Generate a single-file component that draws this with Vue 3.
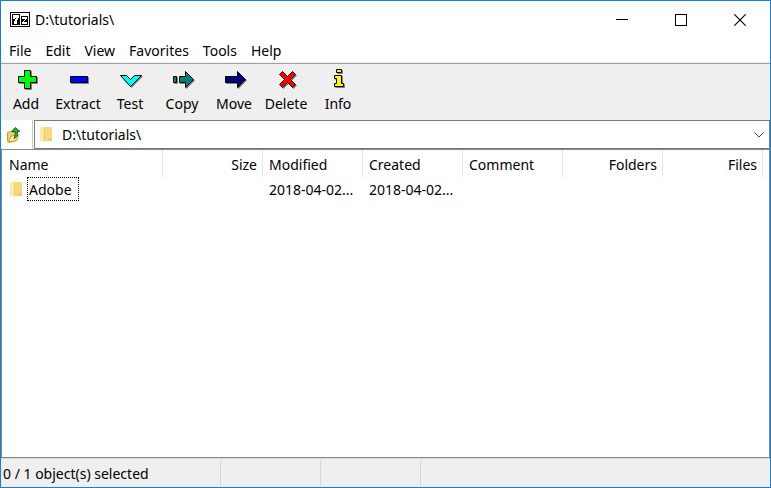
<template>
  <div class="window">
    <header class="titlebar">
      <svg class="logo" width="20" height="16" viewBox="0 0 20 16" shape-rendering="crispEdges">
        <rect width="20" height="15" fill="#000" />
        <rect x="1" y="1" width="18" height="13" fill="#fff" />
        <path d="M2 2h8v11h-8zM11 4h7v9h-7z" fill="#000" />
        <path d="M3 3h6v3h-1v2h-1v4h-3v-3h1v-2h1v-1h-1v1h-2z" fill="#fff" />
        <path d="M12 5h5v2h-1v1h-1v1h-1v1h3v2h-5v-2h1v-1h1v-1h1v-1h-3z" fill="#fff" />
      </svg>
      <h1 class="title">{{ path }}</h1>
      <div class="window-buttons">
        <button type="button" aria-label="Minimize">
          <svg width="12" height="12" viewBox="0 0 12 12" shape-rendering="crispEdges">
            <path d="M0 5.5h12" stroke="#000" />
          </svg>
        </button>
        <button type="button" aria-label="Maximize">
          <svg width="12" height="12" viewBox="0 0 12 12" shape-rendering="crispEdges">
            <rect x="0.5" y="0.5" width="11" height="11" fill="none" stroke="#000" />
          </svg>
        </button>
        <button type="button" aria-label="Close">
          <svg width="12" height="12" viewBox="0 0 12 12">
            <path d="M0.3 0.3l11.4 11.4M11.7 0.3l-11.4 11.4" stroke="#000" stroke-width="1.1" />
          </svg>
        </button>
      </div>
    </header>

    <nav class="menu">
      <button v-for="item in menu" :key="item" type="button">{{ item }}</button>
    </nav>

    <div class="toolbar" role="toolbar">
      <button v-for="tool in tools" :key="tool.label" type="button">
        <svg width="25" height="24" viewBox="0 0 25 24">
          <path
            v-for="(d, i) in tool.shapes"
            :key="'s' + i"
            :d="d"
            fill="#808080"
            stroke="#808080"
            transform="translate(1 1)"
          />
          <path
            v-for="(d, i) in tool.shapes"
            :key="i"
            :d="d"
            :fill="tool.color"
            stroke="#000"
          />
        </svg>
        <span>{{ tool.label }}</span>
      </button>
    </div>

    <div class="address">
      <button class="up" type="button" aria-label="Up one level">
        <svg width="16" height="18" viewBox="0 0 16 18">
          <path d="M1.5 6.5l3.5-1 1.500 1h4v8l-7 2-2-1z" fill="#f0d070" stroke="#c9a02c" />
          <path d="M2.5 16l2.5-6 7.5-1-2 5.5z" fill="#fff3b0" stroke="#c59a2c" />
          <path
            d="M9.5 1.5l4.500 4h-2.500c.5 4-.5 6-3.500 7 1-2 1.300-4 1.200-7H5.500z"
            fill="#32a532"
            stroke="#13701a"
          />
        </svg>
      </button>
      <div class="combo">
        <svg class="folder" width="13" height="17" viewBox="0 0 13 17">
          <path d="M3 1h9v14H3z" fill="#f8d982" />
          <path d="M8 12h4v3H8z" fill="#f0ca66" />
          <path d="M0 1l4 1v14l-4-1z" fill="#ffe9a9" />
          <path d="M4 2h1v13H4z" fill="#efc96c" />
        </svg>
        <input v-model="path" type="text" aria-label="Path" />
        <button type="button" aria-label="Show folders">
          <svg width="10" height="6" viewBox="0 0 10 6">
            <path d="M0.5 0.5l4.5 4.5 4.5-4.5" fill="none" stroke="#444" />
          </svg>
        </button>
      </div>
    </div>

    <main class="list">
      <table>
        <colgroup>
          <col class="col-name" />
          <col v-for="n in 6" :key="n" class="col" />
          <col />
        </colgroup>
        <thead>
          <tr>
            <th v-for="col in columns" :key="col.label" :class="{ right: col.right }">
              {{ col.label }}
            </th>
            <td></td>
          </tr>
        </thead>
        <tbody>
          <tr v-for="file in files" :key="file.name">
            <td>
              <div class="name">
                <svg class="folder" width="13" height="17" viewBox="0 0 13 17">
                  <path d="M3 1h9v14H3z" fill="#f8d982" />
                  <path d="M8 12h4v3H8z" fill="#f0ca66" />
                  <path d="M0 1l4 1v14l-4-1z" fill="#ffe9a9" />
                  <path d="M4 2h1v13H4z" fill="#efc96c" />
                </svg>
                <span class="focused">{{ file.name }}</span>
              </div>
            </td>
            <td></td>
            <td>{{ file.modified }}</td>
            <td>{{ file.created }}</td>
            <td></td>
            <td></td>
            <td></td>
            <td></td>
          </tr>
        </tbody>
      </table>
    </main>

    <footer class="status">
      <span class="selected">0 / {{ files.length }} object(s) selected</span>
      <span></span>
      <span></span>
    </footer>
  </div>
</template>

<script setup>
import { ref } from 'vue'

const path = ref('D:\\tutorials\\')

const menu = ['File', 'Edit', 'View', 'Favorites', 'Tools', 'Help']

const tools = [
  {
    label: 'Add',
    color: '#00ff00',
    shapes: ['M10.5 2.5h6v6h6v6h-6v6h-6v-6h-6v-6h6z'],
  },
  { label: 'Extract', color: '#0000ff', shapes: ['M4.5 8.5h17v6h-17z'] },
  {
    label: 'Test',
    color: '#00ffff',
    shapes: ['M2.5 7.5h6l4 4 4-4h7l-11 11z'],
  },
  {
    label: 'Copy',
    color: '#008080',
    shapes: ['M3.5 8.5h3v6h-3z', 'M9.5 8.5h6v-5l8 8-8 8v-5h-6z'],
  },
  {
    label: 'Move',
    color: '#000080',
    shapes: ['M3.5 8.5h12v-5l8 8-8 8v-5h-12z'],
  },
  {
    label: 'Delete',
    color: '#ff0000',
    shapes: [
      'M8.5 3.5l5 5 5-5 3 3-5 5 5 5-3 3-5-5-5 5-3-3 5-5-5-5z',
    ],
  },
  {
    label: 'Info',
    color: '#ffff00',
    shapes: ['M10.5 1.5h5v3h-5z', 'M8.5 7.5h7v8h2v3h-9v-3h2v-5h-2z'],
  },
]

const columns = [
  { label: 'Name' },
  { label: 'Size', right: true },
  { label: 'Modified' },
  { label: 'Created' },
  { label: 'Comment' },
  { label: 'Folders', right: true },
  { label: 'Files', right: true },
]

const files = ref([
  { name: 'Adobe', modified: '2018-04-02...', created: '2018-04-02...' },
])
</script>

<style scoped>
.window {
  display: flex;
  flex-direction: column;
  box-sizing: border-box;
  min-height: 100vh;
  border: 1px solid #1a7fd4;
  background: #fff;
  color: #000;
  font: 14px/20px 'Noto Sans', 'Open Sans', sans-serif;
}

button,
input {
  margin: 0;
  padding: 0;
  border: 0;
  background: none;
  color: inherit;
  font: inherit;
}

svg {
  display: block;
  flex: none;
}

.titlebar {
  display: flex;
  align-items: center;
  height: 37px;
  padding: 0 1px 0 9px;
}

.title {
  flex: 1;
  margin: 0 0 0 5px;
  font-size: 14px;
  font-weight: normal;
}

.window-buttons {
  display: flex;
}

.window-buttons button {
  display: flex;
  align-items: center;
  justify-content: center;
  width: 59px;
  height: 36px;
}

.menu {
  display: flex;
  gap: 14px;
  box-sizing: border-box;
  height: 25px;
  padding: 2px 0 0 8px;
  border-bottom: 1px solid #f0f0f0;
}

.toolbar {
  display: flex;
  height: 56px;
  border-top: 1px solid #a0a0a0;
  background: #efefef;
}

.toolbar button {
  display: flex;
  flex-direction: column;
  align-items: center;
  width: 52px;
  padding: 4px 2px 0 0;
}

.toolbar span {
  margin-top: 2px;
}

.address {
  display: flex;
  height: 29px;
}

.up {
  display: flex;
  align-items: center;
  width: 32px;
  padding-left: 5px;
  border-right: 1px solid #c8c8c8;
}

.combo {
  display: flex;
  flex: 1;
  align-items: center;
  margin-left: 1px;
  padding-left: 5px;
  border: 1px solid #7a7a7a;
}

.combo input {
  flex: 1;
  min-width: 0;
  margin-left: 9px;
  outline: none;
}

.combo button {
  display: flex;
  justify-content: center;
  width: 20px;
}

.list {
  flex: 1;
  border: 1px solid #828790;
  overflow: hidden;
}

table {
  width: 100%;
  border-collapse: separate;
  border-spacing: 0;
  table-layout: fixed;
}

.col-name {
  width: 161px;
}

.col {
  width: 100px;
}

th,
td {
  padding: 0 0 0 6px;
  font-weight: normal;
  text-align: left;
  white-space: nowrap;
}

thead tr {
  height: 27px;
}

th {
  padding-top: 2px;
  border-right: 1px solid #e5e5e5;
}

th:first-child {
  padding-left: 7px;
}

th.right {
  padding: 2px 5px 0 0;
  text-align: right;
}

tbody td {
  padding-top: 1px;
}

tbody td:first-child {
  padding: 0 0 0 8px;
}

.name {
  display: flex;
  align-items: center;
  gap: 4px;
}

.focused {
  padding: 2px 6px 0 1px;
  border: 1px dotted #000;
}

.status {
  display: flex;
  height: 28px;
  border-top: 1px solid #d8d8d8;
  background: #efefef;
}

.status span {
  box-sizing: border-box;
  width: 100px;
  margin: 1px 0;
  padding: 4px 2px 0;
  border-right: 1px solid #d5d5d5;
}

.status .selected {
  width: 220px;
}
</style>
